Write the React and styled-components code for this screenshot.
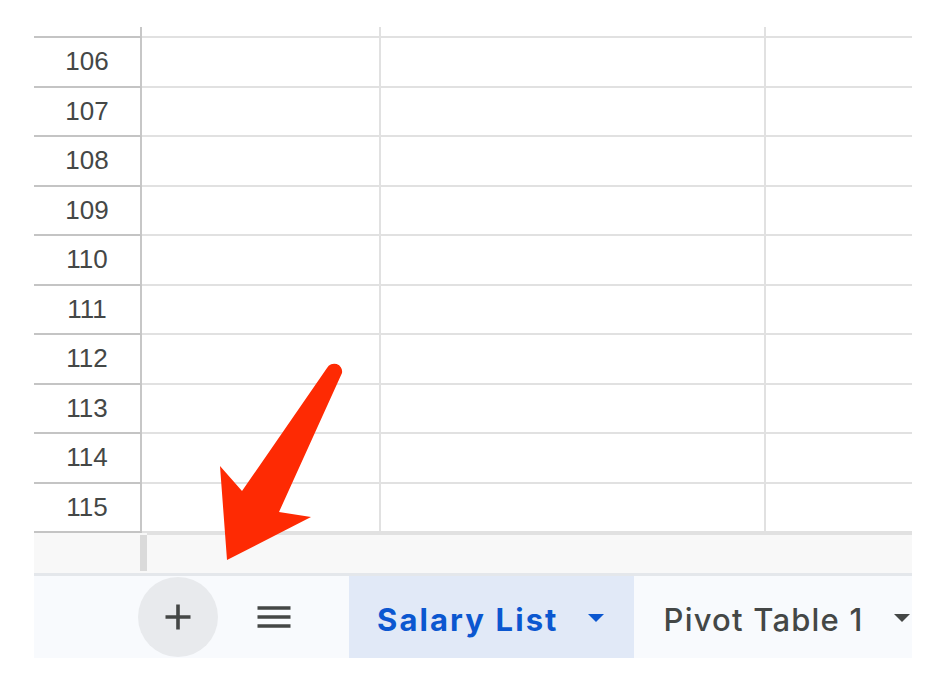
import React from "react";
import styled, { createGlobalStyle } from "styled-components";

const Global = createGlobalStyle`
  html, body { margin: 0; padding: 0; background: #ffffff; }
  body { font-family: "Liberation Sans", Arial, sans-serif; }
  * { box-sizing: border-box; }
`;

const Page = styled.div`
  position: relative;
  width: 936px;
  height: 678px;
  padding: 27px 24px 0 34px;
  overflow: hidden;
`;

const Sheet = styled.div`
  width: 878px;
  display: flex;
  flex-direction: column;
`;

const Row = styled.div`
  display: grid;
  grid-template-columns: 108px 239px 385px 1fr;
  height: ${(p) => (p.$stub ? "11px" : "49.5px")};
`;

const HeaderCell = styled.div`
  display: flex;
  align-items: center;
  justify-content: center;
  border-right: 2px solid #c7c7c7;
  border-bottom: 2px solid #c4c4c4;
  font-family: "Liberation Sans", Arial, sans-serif;
  font-size: 26px;
  color: #444746;
`;

const Cell = styled.div`
  border-bottom: 2px solid #e1e1e1;
  border-right: ${(p) => (p.$last ? "none" : "2px solid #e1e1e1")};
`;

const ScrollStrip = styled.div`
  display: flex;
  height: 43px;
  background: #f8f8f8;
  border-bottom: 3px solid #e4e7eb;
`;

const StripSpacer = styled.div`
  width: 106px;
  flex: none;
`;

const Handle = styled.div`
  width: 7px;
  flex: none;
  margin: 2px 0 2px;
  background: #dadada;
`;

const Track = styled.div`
  flex: 1;
  border-top: 2px solid #e1e1e1;
`;

const TabBar = styled.div`
  display: flex;
  align-items: stretch;
  height: 82px;
  padding-left: 104px;
  background: #f8fafd;
  overflow: hidden;
`;

const IconButton = styled.div`
  flex: none;
  align-self: center;
  width: 80px;
  height: 80px;
  margin-left: ${(p) => p.$ml || 0}px;
  border-radius: 50%;
  background: ${(p) => (p.$filled ? "#e8eaed" : "transparent")};
  display: flex;
  align-items: center;
  justify-content: center;
  color: #444746;
`;

const Tab = styled.div`
  flex: none;
  display: flex;
  align-items: center;
  gap: ${(p) => (p.$active ? 29 : 30)}px;
  padding: 5px 30px 0 ${(p) => (p.$active ? 28 : 30)}px;
  margin-left: ${(p) => p.$ml || 0}px;
  background: ${(p) => (p.$active ? "#e1e9f7" : "transparent")};
  color: ${(p) => (p.$active ? "#0b57d0" : "#444746")};
  font-family: Inter, "Noto Sans", sans-serif;
  font-size: 31px;
  font-weight: ${(p) => (p.$active ? 700 : 500)};
  letter-spacing: ${(p) => (p.$active ? 2.1 : 1.2)}px;
  white-space: nowrap;
`;

const Caret = styled.span`
  width: 0;
  height: 0;
  margin-top: -3px;
  border-left: 8.5px solid transparent;
  border-right: 8.5px solid transparent;
  border-top: 8px solid currentColor;
  flex: none;
`;

const ArrowOverlay = styled.svg`
  position: absolute;
  left: 0;
  top: 0;
  pointer-events: none;
`;

const rows = [106, 107, 108, 109, 110, 111, 112, 113, 114, 115];

function GridRow({ label, stub }) {
  return (
    <Row $stub={stub}>
      <HeaderCell>{label}</HeaderCell>
      <Cell />
      <Cell />
      <Cell $last />
    </Row>
  );
}

export default function App() {
  return (
    <>
      <Global />
      <Page>
        <Sheet>
          <GridRow stub />
          {rows.map((r) => (
            <GridRow key={r} label={r} />
          ))}
          <ScrollStrip>
            <StripSpacer />
            <Handle />
            <Track />
          </ScrollStrip>
          <TabBar>
            <IconButton $filled>
              <svg width="26" height="26" viewBox="0 0 26 26">
                <path d="M13 0.5v25M0.5 13h25" stroke="#444746" strokeWidth="3.6" fill="none" />
              </svg>
            </IconButton>
            <IconButton $ml={16}>
              <svg width="34" height="24" viewBox="0 0 34 24">
                <path d="M0.5 3h33M0.5 12h33M0.5 21h33" stroke="#444746" strokeWidth="3.6" fill="none" />
              </svg>
            </IconButton>
            <Tab $active $ml={35}>
              Salary List
              <Caret />
            </Tab>
            <Tab>
              Pivot Table 1
              <Caret />
            </Tab>
          </TabBar>
        </Sheet>
        <ArrowOverlay width="936" height="678" viewBox="0 0 936 678">
          <path
            d="M327 368 L242 491 L220 466 L227 560 L311 517 L279 512 L342 373 A8 8 0 0 0 327 368 Z"
            fill="#fe2a03"
          />
        </ArrowOverlay>
      </Page>
    </>
  );
}
